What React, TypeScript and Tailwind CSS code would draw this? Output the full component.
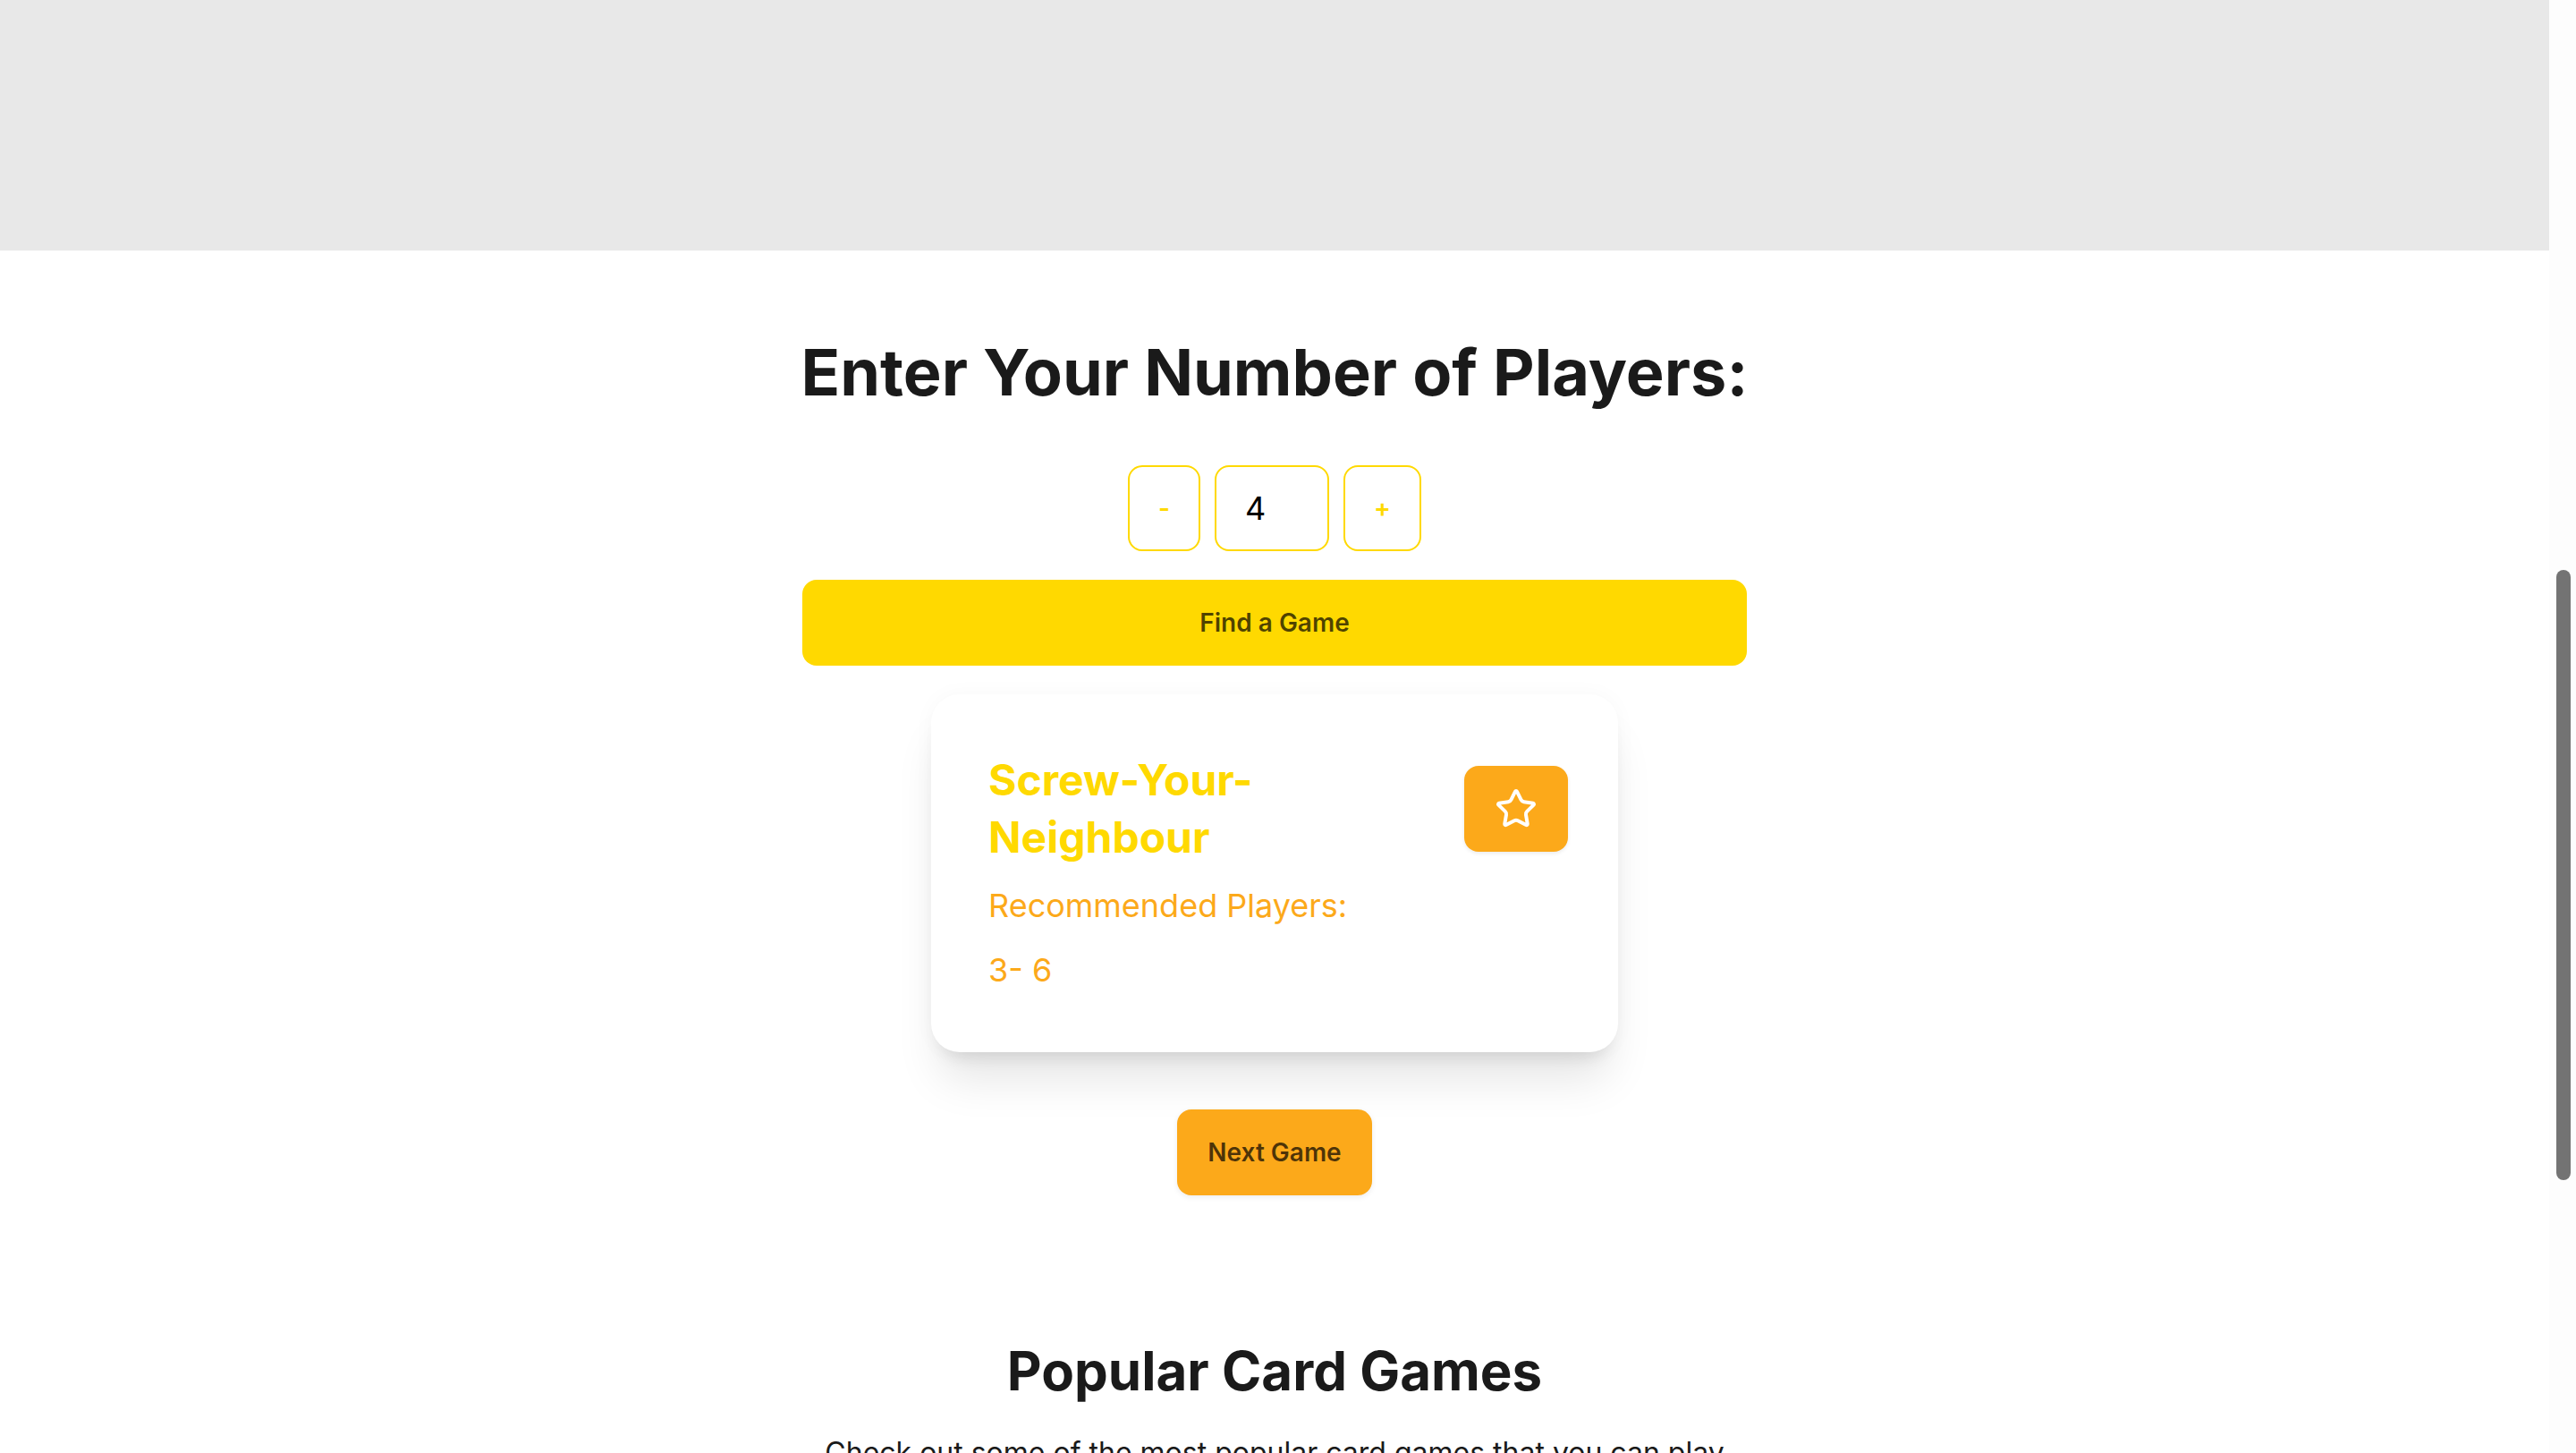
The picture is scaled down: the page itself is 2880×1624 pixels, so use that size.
import { Star } from "lucide-react";
import { useState } from "react";

export default function App() {
  const [players, setPlayers] = useState(4);

  return (
    <div className="flex min-h-screen bg-white font-[Inter,sans-serif] text-[#1a1a1a]">
      <div className="min-w-0 flex-1">
        <header className="h-[280px] bg-[#e8e8e8]" />

        <main className="flex flex-col items-center pt-24 pb-32">
          <h1 className="text-[72px] leading-[80px] font-bold">Enter Your Number of Players:</h1>

          <div className="mt-16 flex gap-4">
            <button
              onClick={() => setPlayers((p) => Math.max(1, p - 1))}
              className="h-24 rounded-2xl border-2 border-[#ffd900] px-8 text-[28px] font-semibold text-[#ffd900]"
            >
              -
            </button>
            <input
              value={players}
              readOnly
              className="h-24 w-32 rounded-2xl border-2 border-[#ffd900] px-8 text-[36px] text-black outline-none"
            />
            <button
              onClick={() => setPlayers((p) => p + 1)}
              className="h-24 rounded-2xl border-2 border-[#ffd900] px-8 text-[28px] font-semibold text-[#ffd900]"
            >
              +
            </button>
          </div>

          <button className="mt-8 h-24 w-[1056px] rounded-2xl bg-[#ffd900] text-[28px] font-semibold text-black/70">
            Find a Game
          </button>

          <div className="mt-8 w-[768px] rounded-[32px] bg-white py-16 pr-14 pl-16 shadow-[0_40px_50px_-10px_rgba(0,0,0,0.1),0_16px_20px_-12px_rgba(0,0,0,0.1),0_0_24px_rgba(0,0,0,0.03)]">
            <div className="flex items-center justify-between gap-8">
              <h2 className="text-[48px] leading-[64px] font-bold text-[#ffd900]">Screw-Your-Neighbour</h2>
              <button className="flex h-24 w-[116px] shrink-0 items-center justify-center rounded-2xl bg-[#fca91a] shadow-[0_2px_4px_rgba(0,0,0,0.08)]">
                <Star className="h-12 w-12 text-white" strokeWidth={2} />
              </button>
            </div>
            <p className="mt-4 text-[36px] leading-[56px] text-[#fca91a]">Recommended Players:</p>
            <p className="mt-4 text-[36px] leading-[56px] text-[#fca91a]">3- 6</p>
          </div>

          <button className="mt-16 h-24 rounded-2xl bg-[#fca91a] px-[34px] text-[28px] font-semibold text-black/70 shadow-[0_2px_6px_rgba(0,0,0,0.08)]">
            Next Game
          </button>

          <h2 className="mt-40 text-[60px] leading-[72px] font-bold">Popular Card Games</h2>
          <p className="mt-8 max-w-[1056px] text-center text-[32px] leading-[48px]">
            Check out some of the most popular card games that you can play with your friends and family.
          </p>
        </main>
      </div>

      {/* page scrollbar as it shows in the reference */}
      <aside className="sticky top-0 h-screen w-[30px] shrink-0 bg-[#fdfdfd]">
        <div className="mt-[637px] ml-2 h-[682px] w-4 rounded-full bg-[#737373]" />
      </aside>
    </div>
  );
}
